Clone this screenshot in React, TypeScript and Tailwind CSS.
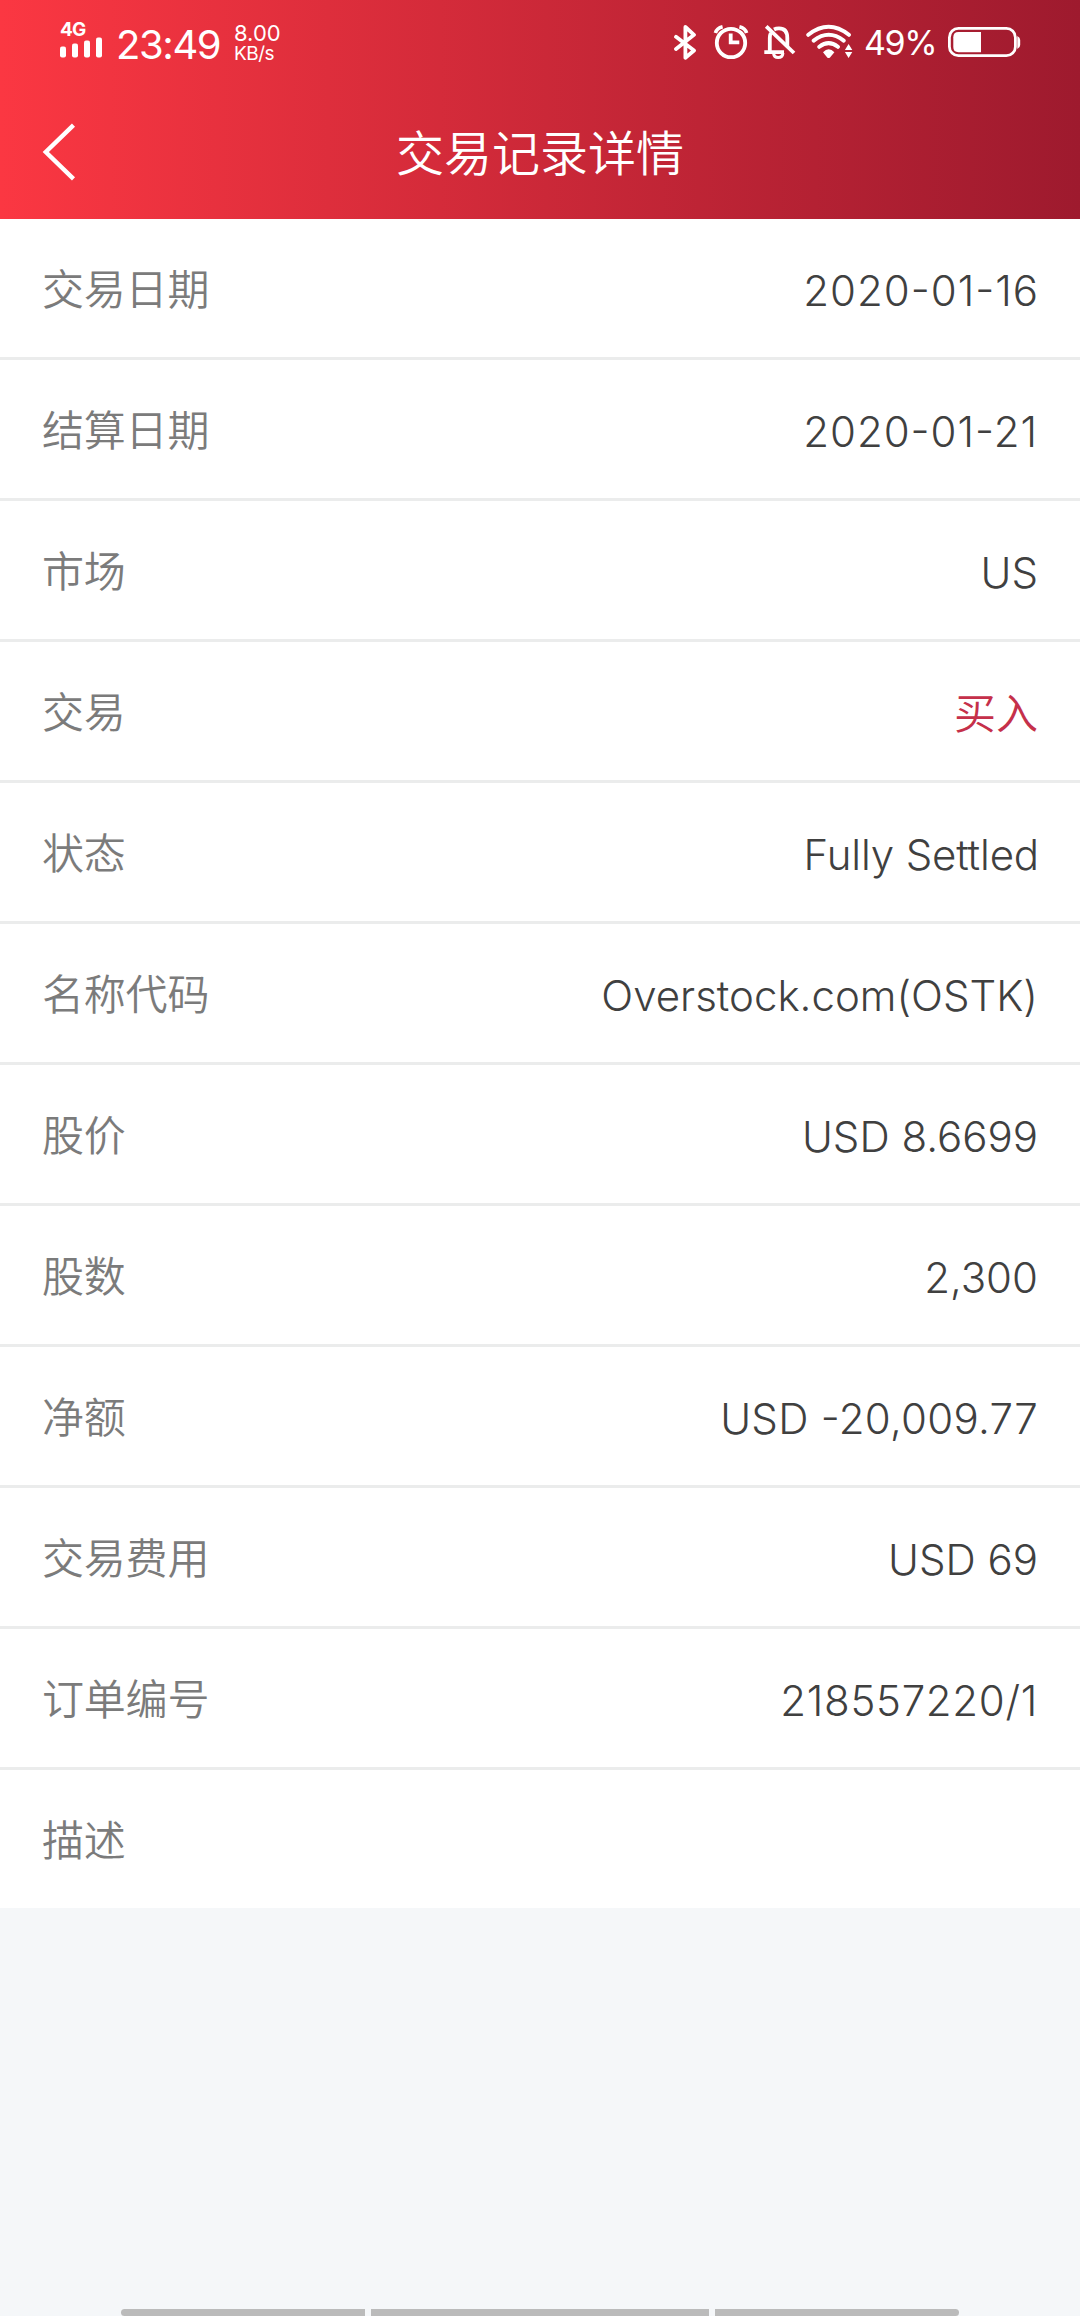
/* ── Data ───────────────────────────────────────────────────────────── */

interface DetailItem {
  label: string
  value: string
  className?: string
}

const DETAILS: DetailItem[] = [
  {
    label: '交易日期',
    value: '2020-01-16',
    className: "text-[#404040] tracking-[1px] mr-[-1px] [font-feature-settings:'case'_1]",
  },
  {
    label: '结算日期',
    value: '2020-01-21',
    className: "text-[#404040] tracking-[1px] [font-feature-settings:'case'_1]",
  },
  { label: '市场', value: 'US' },
  { label: '交易', value: '买入', className: 'text-[#c5304a] font-[350]' },
  { label: '状态', value: 'Fully Settled', className: 'text-[#404040] tracking-[-0.15px] mr-[-1px]' },
  { label: '名称代码', value: 'Overstock.com(OSTK)' },
  { label: '股价', value: 'USD 8.6699' },
  { label: '股数', value: '2,300' },
  {
    label: '净额',
    value: 'USD -20,009.77',
    className: "text-[#404040] tracking-[0.3px] [font-feature-settings:'case'_1]",
  },
  { label: '交易费用', value: 'USD 69' },
  { label: '订单编号', value: '218557220/1', className: 'text-[#404040] tracking-[0.7px]' },
  { label: '描述', value: '' },
]

/* ── Status bar icons ───────────────────────────────────────────────── */

function SignalIcon() {
  return (
    <svg className="h-[21px] w-[42px]" viewBox="61 36.5 42 21" fill="currentColor">
      <rect x="61" y="46" width="6" height="11" rx="2" />
      <rect x="73" y="43" width="6" height="14" rx="2" />
      <rect x="85" y="40" width="6" height="17" rx="2" />
      <rect x="97" y="37" width="6" height="20" rx="2" />
    </svg>
  )
}

function BluetoothIcon() {
  return (
    <svg
      className="h-9 w-6"
      viewBox="673 24 24 36"
      fill="none"
      stroke="currentColor"
      strokeWidth="3.8"
      strokeLinecap="round"
      strokeLinejoin="round"
    >
      <path d="M676 36.8 694 50.5 685.4 57.8V27L694 34.8 676 49" />
    </svg>
  )
}

function AlarmIcon() {
  return (
    <svg className="h-9 w-9" viewBox="713 24 36 36" fill="none" stroke="currentColor" strokeWidth="3.8">
      <circle cx="731" cy="43" r="14.2" />
      <path d="M730.7 33.5v8.8h8.6" />
      <path d="M715.4 33q1.4-4.8 7.2-6.2M746.6 33q-1.4-4.8-7.2-6.2" strokeWidth="3.6" />
    </svg>
  )
}

function BellOffIcon() {
  return (
    <svg className="h-9 w-8" viewBox="764 24 32 36" fill="none" stroke="currentColor" strokeWidth="3.8">
      <path d="M764.3 52.2H784M769.8 52V38q0-3 1-5M774 29.5q2-1.1 5-1.1 8.3 0 8.3 9.5V47" />
      <path d="M766.2 26.3 794 53" />
      <path d="M773.5 53q.5 4.6 4.7 4.6t4.8-4.6" strokeWidth="3" />
    </svg>
  )
}

function WifiIcon() {
  return (
    <svg
      className="h-9 w-12"
      viewBox="806 24 48 36"
      fill="none"
      stroke="currentColor"
      strokeWidth="4"
      strokeLinecap="round"
    >
      <path d="M808.3 34.8q20.3-16 40.6 0M813.7 40.6q15-11.6 30 0M819.3 46.8q9.3-7.4 18.6 0" />
      <path d="M823 52.2q5.7-5.8 11.4 0L830 57.4q-1.4 1.4-2.8 0Z" fill="currentColor" stroke="none" />
      <path d="m848.6 44 3.7 6h-7.4ZM848.6 58l3.7-6h-7.4Z" fill="currentColor" stroke="none" />
    </svg>
  )
}

function BatteryIcon() {
  return (
    <svg className="h-9 w-[73px]" viewBox="948 24 73 36" fill="currentColor">
      <rect x="949.4" y="28.4" width="66" height="27.3" rx="9" fill="none" stroke="currentColor" strokeWidth="2.8" />
      <path d="M958.5 32H981v20.3h-22.5q-5.2 0-5.2-5.2V37.2q0-5.2 5.2-5.2Z" />
      <path d="M1017.3 36q2.9 1.5 2.9 4v5q0 2.5-2.9 4Z" />
    </svg>
  )
}

/* ── Sections ───────────────────────────────────────────────────────── */

function StatusBar() {
  return (
    <div className="flex h-[84px] justify-between pr-[59px] pl-[60px]">
      <div className="flex pt-[21px]">
        <div className="flex w-[56px] flex-col">
          <span className="h-[16px] text-[19px] leading-[18px] font-bold tracking-[-0.8px]">4G</span>
          <SignalIcon />
        </div>
        <span className="w-[118px] text-[40px] leading-[47px] tracking-[-1.4px]">23:49</span>
        <div className="flex flex-col pt-[2px]">
          <span className="text-[22px] leading-[20px]">8.00</span>
          <span className="text-[19px] leading-[21px] tracking-[-0.5px]">KB/s</span>
        </div>
      </div>
      <div className="flex pt-6">
        <BluetoothIcon />
        <div className="ml-4">
          <AlarmIcon />
        </div>
        <div className="ml-[15px]">
          <BellOffIcon />
        </div>
        <div className="ml-[10px]">
          <WifiIcon />
        </div>
        <span className="ml-[10px] w-[84px] text-[34px] leading-[38px] tracking-[-1.4px]">49%</span>
        <BatteryIcon />
      </div>
    </div>
  )
}

function TitleBar() {
  return (
    <div className="flex h-[135px] items-center px-[42px]">
      <svg className="h-[60px] w-9" viewBox="42 122 36 60" fill="none" stroke="currentColor" strokeWidth="4.4">
        <path d="M73.5 125.2 45.8 152l27.7 26.8" />
      </svg>
      <h1 className="mt-[4px] mr-9 flex-1 text-center text-[48px] leading-[70px] font-[350]">交易记录详情</h1>
    </div>
  )
}

function DetailRow({ label, value, className = 'text-[#404040]' }: DetailItem) {
  return (
    <div className="flex h-[141px] items-center justify-between border-b-[3px] border-[#ebecec] px-[42px] pt-1 last:h-[138px] last:border-b-0">
      <span className="text-[42px] leading-[60px] font-[350] tracking-[-0.2px] text-[#7b7b7b]">{label}</span>
      <span className={`pt-[2px] text-[42px] leading-[60px] ${value === '买入' ? '' : 'font-light'} ${className}`}>
        {value}
      </span>
    </div>
  )
}

export default function App() {
  return (
    <div className="flex h-[2316px] w-[1080px] flex-col overflow-hidden bg-[#f5f7f9] font-['Inter','Noto_Sans_CJK_SC',sans-serif]">
      <header className="bg-linear-to-r from-[#fb3742] to-[#9e1a2e] text-white">
        <StatusBar />
        <TitleBar />
      </header>

      <main className="flex-1">
        <div className="bg-white">
          {DETAILS.map((item) => (
            <DetailRow key={item.label} {...item} />
          ))}
        </div>
      </main>

      {/* Gesture navigation hints */}
      <footer className="flex h-[7px] justify-center gap-[6px]">
        <div className="w-[244px] rounded-l-full bg-[#bbb]" />
        <div className="w-[338px] bg-[#bbb]" />
        <div className="w-[244px] rounded-r-full bg-[#bbb]" />
      </footer>
    </div>
  )
}
